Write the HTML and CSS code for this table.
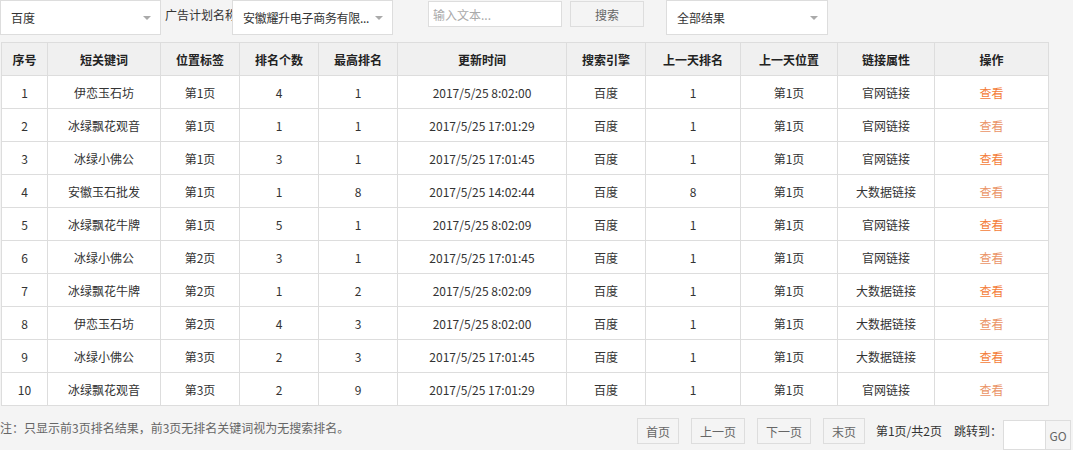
FILE: index.html
```html
<!DOCTYPE html>
<html lang="zh-CN">
<head>
<meta charset="utf-8">
<title>关键词排名</title>
<link rel="stylesheet" href="styles.css">
</head>
<body>
<div class="page">
  <div class="toolbar">
    <div class="select s1"><span class="sel-text">百度</span><span class="caret"></span></div>
    <div class="label">广告计划名称</div>
    <div class="select s2"><span class="sel-text">安徽耀升电子商务有限...</span><span class="caret"></span></div>
    <input class="search-input" type="text" placeholder="输入文本...">
    <button class="search-btn">搜索</button>
    <div class="select s3"><span class="sel-text">全部结果</span><span class="caret"></span></div>
  </div>

  <table class="grid">
    <colgroup>
      <col style="width:46px"><col style="width:113px"><col style="width:79px"><col style="width:79px"><col style="width:79px"><col style="width:169px"><col style="width:79px"><col style="width:95px"><col style="width:97px"><col style="width:97px"><col style="width:114px">
    </colgroup>
    <thead>
      <tr><th>序号</th><th>短关键词</th><th>位置标签</th><th>排名个数</th><th>最高排名</th><th>更新时间</th><th>搜索引擎</th><th>上一天排名</th><th>上一天位置</th><th>链接属性</th><th>操作</th></tr>
    </thead>
    <tbody>
      <tr><td>1</td><td>伊恋玉石坊</td><td>第1页</td><td>4</td><td>1</td><td>2017/5/25 8:02:00</td><td>百度</td><td>1</td><td>第1页</td><td>官网链接</td><td><a class="view">查看</a></td></tr>
      <tr><td>2</td><td>冰绿飘花观音</td><td>第1页</td><td>1</td><td>1</td><td>2017/5/25 17:01:29</td><td>百度</td><td>1</td><td>第1页</td><td>官网链接</td><td><a class="view">查看</a></td></tr>
      <tr><td>3</td><td>冰绿小佛公</td><td>第1页</td><td>3</td><td>1</td><td>2017/5/25 17:01:45</td><td>百度</td><td>1</td><td>第1页</td><td>官网链接</td><td><a class="view">查看</a></td></tr>
      <tr><td>4</td><td>安徽玉石批发</td><td>第1页</td><td>1</td><td>8</td><td>2017/5/25 14:02:44</td><td>百度</td><td>8</td><td>第1页</td><td>大数据链接</td><td><a class="view">查看</a></td></tr>
      <tr><td>5</td><td>冰绿飘花牛牌</td><td>第1页</td><td>5</td><td>1</td><td>2017/5/25 8:02:09</td><td>百度</td><td>1</td><td>第1页</td><td>官网链接</td><td><a class="view">查看</a></td></tr>
      <tr><td>6</td><td>冰绿小佛公</td><td>第2页</td><td>3</td><td>1</td><td>2017/5/25 17:01:45</td><td>百度</td><td>1</td><td>第1页</td><td>官网链接</td><td><a class="view">查看</a></td></tr>
      <tr><td>7</td><td>冰绿飘花牛牌</td><td>第2页</td><td>1</td><td>2</td><td>2017/5/25 8:02:09</td><td>百度</td><td>1</td><td>第1页</td><td>大数据链接</td><td><a class="view">查看</a></td></tr>
      <tr><td>8</td><td>伊恋玉石坊</td><td>第2页</td><td>4</td><td>3</td><td>2017/5/25 8:02:00</td><td>百度</td><td>1</td><td>第1页</td><td>大数据链接</td><td><a class="view">查看</a></td></tr>
      <tr><td>9</td><td>冰绿小佛公</td><td>第3页</td><td>2</td><td>3</td><td>2017/5/25 17:01:45</td><td>百度</td><td>1</td><td>第1页</td><td>大数据链接</td><td><a class="view">查看</a></td></tr>
      <tr><td>10</td><td>冰绿飘花观音</td><td>第3页</td><td>2</td><td>9</td><td>2017/5/25 17:01:29</td><td>百度</td><td>1</td><td>第1页</td><td>官网链接</td><td><a class="view">查看</a></td></tr>
    </tbody>
  </table>

  <div class="footer">
    <div class="note">注：只显示前3页排名结果，前3页无排名关键词视为无搜索排名。</div>
    <div class="pager">
      <button class="pbtn w42">首页</button>
      <button class="pbtn w54">上一页</button>
      <button class="pbtn w54">下一页</button>
      <button class="pbtn w42 last">末页</button>
      <span class="pinfo">第1页/共2页</span>
      <span class="jump">跳转到：</span>
      <input class="jump-input" type="text">
      <button class="go">GO</button>
    </div>
  </div>
</div>
</body>
</html>
```

FILE: styles.css
```css
html, body {
  margin: 0;
  padding: 0;
  background: #f4f4f4;
}
body {
  font-family: "Noto Sans CJK SC", "Noto Sans", sans-serif;
  font-size: 12px;
  color: #333;
  width: 1073px;
  height: 450px;
  overflow: hidden;
}
.page {
  display: flex;
  flex-direction: column;
}
.toolbar {
  display: flex;
  align-items: flex-start;
  height: 35px;
}
.select {
  box-sizing: border-box;
  height: 35px;
  background: #fff;
  border: 1px solid #ddd;
  display: flex;
  align-items: center;
  padding: 0 9px 0 10px;
  font-size: 12px;
  color: #333;
}
.s1 { width: 161px; }
.s2 { width: 161px; }
.s3 { width: 162px; margin-left: 22px; padding-left: 10px; }
.sel-text {
  white-space: nowrap;
  flex: 1;
  overflow: hidden;
}
.s2 .sel-text { letter-spacing: -0.3px; }
.caret {
  flex-shrink: 0;
  width: 0;
  height: 0;
  border-left: 4px solid transparent;
  border-right: 4px solid transparent;
  border-top: 4px solid #aaa;
  margin-top: 1px;
}
.label {
  width: 67px;
  margin-left: 4px;
  overflow: hidden;
  white-space: nowrap;
  line-height: 30px;
  color: #333;
}
.search-input {
  box-sizing: border-box;
  width: 134px;
  height: 26px;
  margin: 1px 0 0 35px;
  border: 1px solid #ddd;
  background: #fff;
  padding: 0 4px;
  font-family: inherit;
  font-size: 12px;
  outline: none;
}
.search-input::placeholder { color: #aaa; }
.search-btn {
  box-sizing: border-box;
  width: 74px;
  height: 26px;
  margin: 1px 0 0 8px;
  border: 1px solid #ddd;
  background: #f4f4f4;
  color: #666;
  font-family: inherit;
  font-size: 12px;
  padding: 0;
}
.grid {
  margin: 7px 0 0 1px;
  border-collapse: collapse;
  table-layout: fixed;
  width: 1047px;
  background: #fff;
}
.grid th, .grid td {
  border: 1px solid #ddd;
  height: 32px;
  padding: 0;
  text-align: center;
  vertical-align: middle;
  white-space: nowrap;
  font-size: 12px;
}
.grid th {
  background: #f0f0f0;
  font-weight: bold;
  color: #222;
}
.grid td { color: #333; }
.view {
  color: #f47c38;
  cursor: pointer;
}
.grid tbody tr:nth-child(even) .view { color: #ea9466; }
.footer {
  display: flex;
  justify-content: space-between;
  align-items: flex-start;
  height: 45px;
}
.note {
  margin-top: 13px;
  color: #666;
  font-size: 12px;
}
.pager {
  display: flex;
  align-items: flex-start;
  margin-top: 12px;
  margin-right: 2px;
}
.pbtn {
  box-sizing: border-box;
  height: 26px;
  border: 1px solid #ddd;
  background: #f4f4f4;
  color: #666;
  font-family: inherit;
  font-size: 12px;
  padding: 0;
  margin-right: 12px;
}
.w42 { width: 42px; }
.w54 { width: 54px; }
.pbtn.last { margin-right: 11px; }
.pinfo { color: #333; margin-right: 12px; line-height: 26px; }
.jump { color: #333; margin-right: 1px; line-height: 26px; }
.jump-input {
  box-sizing: border-box;
  width: 43px;
  height: 30px;
  border: 1px solid #ddd;
  background: #fff;
  margin-top: 2px;
  outline: none;
}
.go {
  box-sizing: border-box;
  width: 25px;
  height: 30px;
  margin-top: 2px;
  border: 1px solid #ddd;
  border-left: none;
  background: #f4f4f4;
  color: #666;
  font-family: inherit;
  font-size: 12px;
  padding: 0;
}
```
